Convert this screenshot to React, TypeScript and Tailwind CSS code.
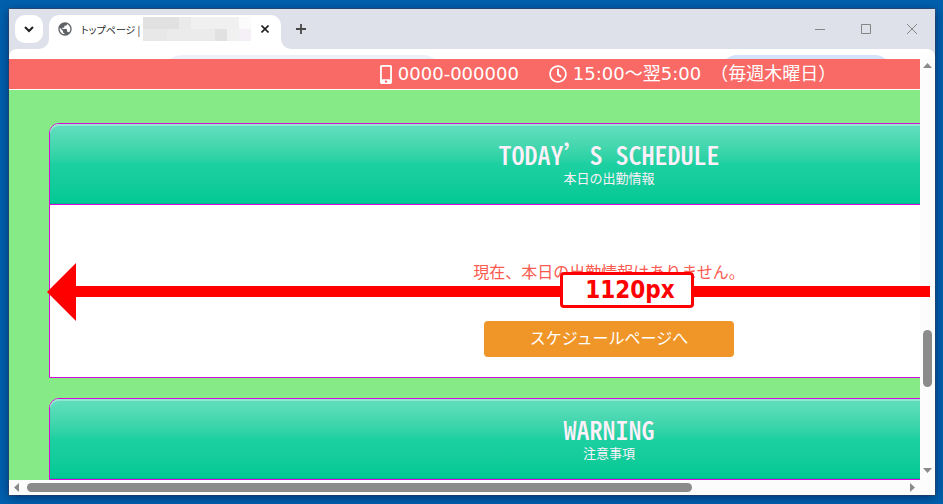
import React from 'react';
import { FaMobileAlt, FaRegClock } from 'react-icons/fa';
import { MdPublic } from 'react-icons/md';

interface PanelProps {
  title: React.ReactNode;
  subtitle: string;
  children?: React.ReactNode;
}

// Placeholder tiles that hide the site name in the tab
const tiles = [
  'bg-[#e1e1e1]', 'bg-[#e1e1e1]', 'bg-[#e1e1e1]', 'bg-[#eaeaea]', 'bg-[#f0f0f0]', 'bg-[#f0f0f0]', 'bg-[#f0f0f0]', 'bg-[#f0f0f0]', 'bg-[#fbfbfb]',
  'bg-[#e8e8e8]', 'bg-[#e8e8e8]', 'bg-[#ebebeb]', 'bg-[#ebebeb]', 'bg-[#ebebeb]', 'bg-[#ebebeb]', 'bg-[#e1e1e1]', 'bg-[#f1f1f1]', 'bg-[#f5f0f8]',
];

const TabStrip: React.FC = () => (
  <header className="flex h-10 shrink-0 items-end bg-[#dee1e9]">
    <button type="button" aria-label="タブを検索" className="mb-1.5 ml-1.5 flex size-7 items-center justify-center rounded-[10px] bg-white text-[#1f1f1f]">
      <svg className="size-3" viewBox="0 0 12 12" fill="none" stroke="currentColor" strokeWidth="2">
        <path d="M2 4l4 4 4-4" />
      </svg>
    </button>
    <div className="relative ml-1.5 flex h-[34px] w-58 items-center rounded-t-[10px] bg-white pr-2 pb-1.5 pl-2">
      {/* Flared corners at the foot of the tab */}
      <svg className="absolute bottom-0 -left-2.5 size-2.5" viewBox="0 0 10 10" fill="#fff">
        <path d="M10 0v10H0A10 10 0 0 0 10 0z" />
      </svg>
      <svg className="absolute -right-2.5 bottom-0 size-2.5" viewBox="0 0 10 10" fill="#fff">
        <path d="M0 0v10h10A10 10 0 0 1 0 0z" />
      </svg>
      <MdPublic className="size-4 shrink-0 text-[#5f6368]" />
      <span className="ml-2 shrink-0 text-[10px] text-[#1f1f1f] [font-feature-settings:'palt']">トップページ |</span>
      <div className="ml-auto grid w-27 shrink-0 grid-cols-9">
        {tiles.map((tile, i) => (
          <span key={i} className={`h-3 ${tile}`} />
        ))}
      </div>
      <button type="button" aria-label="タブを閉じる" className="ml-1.5 flex w-4 shrink-0 items-center justify-center text-[#1f1f1f]">
        <svg className="size-2" viewBox="0 0 8 8" stroke="currentColor" strokeWidth="1.6">
          <path d="M0.5 0.5l7 7M7.5 0.5l-7 7" />
        </svg>
      </button>
    </div>
    <button type="button" aria-label="新しいタブ" className="mb-3 ml-3 flex size-4 items-center justify-center text-[#474747]">
      <svg className="size-3" viewBox="0 0 12 12" stroke="currentColor" strokeWidth="1.8">
        <path d="M6 1v10M1 6h10" />
      </svg>
    </button>
    <div className="mb-3 ml-auto flex gap-[30px] pr-[15px] text-[#858585]">
      <button type="button" aria-label="最小化" className="size-4">
        <svg className="size-4" viewBox="0 0 16 16" stroke="currentColor">
          <path d="M3 8.5h10" />
        </svg>
      </button>
      <button type="button" aria-label="最大化" className="size-4">
        <svg className="size-4" viewBox="0 0 16 16" fill="none" stroke="currentColor">
          <path d="M3.5 3.5h9v9h-9z" />
        </svg>
      </button>
      <button type="button" aria-label="閉じる" className="size-4">
        <svg className="size-4" viewBox="0 0 16 16" stroke="currentColor">
          <path d="M3 3l10 10M13 3L3 13" />
        </svg>
      </button>
    </div>
  </header>
);

const Toolbar: React.FC = () => (
  <div className="shrink-0 bg-[#dee1e9]">
    <div className="flex h-2.5 justify-between overflow-hidden rounded-t-lg bg-white pt-1.5 pr-11 pl-39">
      <div className="h-8 w-[275px] shrink-0 rounded-full bg-[#edf2fa]" />
      <div className="h-8 w-[170px] shrink-0 rounded-full bg-[#d3e3fd]" />
    </div>
  </div>
);

const Panel: React.FC<PanelProps> = ({ title, subtitle, children }) => (
  <section className="rounded-tl-[10px] rounded-tr-[10px] border border-[#d80ad8] bg-white">
    <div className="rounded-t-[9px] border-b border-[#e000e0] bg-linear-to-b from-[#62dfbf] via-[#1dd0a1] to-[#00c994] pt-[17px] pb-[17px] text-center text-[#fff0fa] shadow-[inset_0_2px_0_rgba(255,255,255,0.3),inset_0_-1px_1px_rgba(0,120,90,0.25)]">
      <h2 className="mb-0.5 text-[26px] leading-[26px] font-medium [font-feature-settings:'hwid']">{title}</h2>
      <p className="text-[13px] leading-[18px]">{subtitle}</p>
    </div>
    {children}
  </section>
);

const Site: React.FC = () => (
  <main className="min-w-0 flex-1 overflow-hidden bg-[#86ea86]">
    <div className="w-[1200px]">
      <div className="flex h-[31px] items-center justify-center gap-[30px] border-b border-white bg-[#f96a66] pr-0.5 font-['DejaVu_Sans','Noto_Sans_CJK_JP',sans-serif] text-lg leading-[30px] text-white">
        <span className="flex items-center gap-1.5">
          <FaMobileAlt className="h-[19px] w-3" />
          0000-000000
        </span>
        <span className="flex items-center gap-1.5">
          <FaRegClock className="size-[18px]" />
          15:00～翌5:00　（毎週木曜日）
        </span>
      </div>
      <div className="space-y-5 px-10 pt-[33px]">
        <Panel
          title={<>TODAY<span className="[font-feature-settings:'fwid']">’</span>S SCHEDULE</>}
          subtitle="本日の出勤情報"
        >
          <div className="flex flex-col items-center pt-[55px] pb-5">
            <p className="text-base leading-[22px] text-[#fa5a50]">現在、本日の出勤情報はありません。</p>
            <a href="#schedule" className="mt-[39px] block w-[250px] rounded bg-[#f09628] pb-1 text-center text-base leading-8 text-white">
              スケジュールページへ
            </a>
          </div>
        </Panel>
        <Panel title="WARNING" subtitle="注意事項">
          <div className="h-40" />
        </Panel>
      </div>
    </div>
  </main>
);

const App: React.FC = () => (
  <div className="h-screen bg-[#0060ae] p-[9px] pr-2 font-['Noto_Sans_CJK_JP',sans-serif]">
    <div className="relative flex h-full flex-col shadow-[0_2px_10px_rgba(0,20,60,0.6),0_0_0_1px_rgba(60,80,110,0.7)]">
      <TabStrip />
      <Toolbar />
      <div className="flex min-h-0 flex-1">
        <Site />
        <div className="flex w-[15px] shrink-0 flex-col items-center bg-[#fcfcfc] py-1 text-[#8b8b8b]">
          <svg className="h-[5px] w-[9px]" viewBox="0 0 9 5" fill="currentColor">
            <path d="M4.5 0L9 5H0z" />
          </svg>
          <div className="flex w-full flex-1 flex-col items-center pt-2.5 pb-2">
            <div className="h-[66%]" />
            <div className="h-[15%] w-[9px] rounded-full bg-current" />
          </div>
          <svg className="mb-[3px] h-[5px] w-[9px]" viewBox="0 0 9 5" fill="currentColor">
            <path d="M0 0h9L4.5 5z" />
          </svg>
        </div>
      </div>
      <div className="flex h-[15px] shrink-0 items-center bg-[#fcfcfc] pr-5 pl-[5px] text-[#8b8b8b]">
        <svg className="h-[9px] w-[5px]" viewBox="0 0 5 9" fill="currentColor">
          <path d="M5 0v9L0 4.5z" />
        </svg>
        <div className="flex-1 px-2">
          <div className="h-[9px] w-[76%] rounded-full bg-current" />
        </div>
        <svg className="h-[9px] w-[5px]" viewBox="0 0 5 9" fill="currentColor">
          <path d="M0 0l5 4.5L0 9z" />
        </svg>
      </div>

      {/* Width annotation laid over the window */}
      <div className="absolute top-[254px] right-[5px] left-[38px] flex h-[58px] items-center">
        <svg className="h-[58px] w-[29px] shrink-0" viewBox="0 0 29 58" fill="#f00">
          <path d="M29 0v58L0 29z" />
        </svg>
        <div className="mb-0.5 h-[11px] flex-1 bg-[#f00]" />
      </div>
      <div className="absolute top-[263px] left-[551px] flex h-9 w-[134px] items-center justify-center rounded border-3 border-[#f00] bg-white pl-1.5 font-['DejaVu_Sans_Condensed','DejaVu_Sans',sans-serif] text-2xl font-bold text-[#f00]">
        1120px
      </div>
    </div>
  </div>
);

export default App;
